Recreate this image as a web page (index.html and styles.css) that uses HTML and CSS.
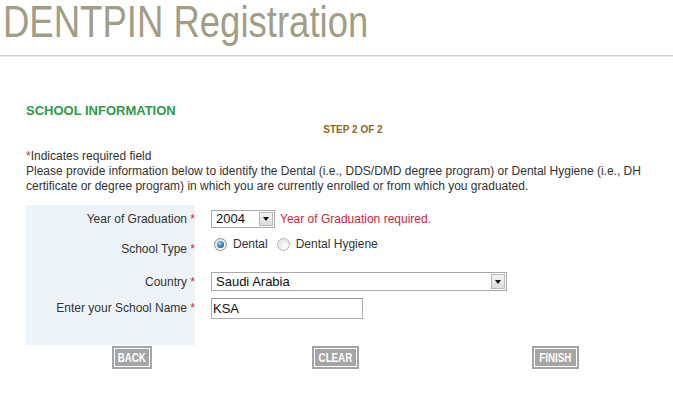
FILE: index.html
```html
<!DOCTYPE html>
<html lang="en">
<head>
<meta charset="utf-8">
<title>DENTPIN Registration</title>
<link rel="stylesheet" href="styles.css">
</head>
<body>
<header class="page-head">
  <h1 class="title">DENTPIN Registration</h1>
</header>
<hr class="rule">
<main class="content">
  <h2 class="section-title">SCHOOL INFORMATION</h2>
  <p class="step">STEP 2 OF 2</p>
  <p class="intro"><span class="req">*</span>Indicates required field<br>Please provide information below to identify the Dental (i.e., DDS/DMD degree program) or Dental Hygiene (i.e., DH certificate or degree program) in which you are currently enrolled or from which you graduated.</p>

  <form class="form">
    <div class="row row-year">
      <label class="label">Year of Graduation <span class="req">*</span></label>
      <div class="control">
        <span class="select select-year"><span class="select-text">2004</span><span class="select-btn"><span class="tri"></span></span></span>
        <span class="error">Year of Graduation required.</span>
      </div>
    </div>
    <div class="row row-type">
      <label class="label">School Type <span class="req">*</span></label>
      <div class="control control-top">
        <span class="radio radio-on"></span><span class="radio-text">Dental</span>
        <span class="radio radio-off"></span><span class="radio-text">Dental Hygiene</span>
      </div>
    </div>
    <div class="row row-country">
      <label class="label">Country <span class="req">*</span></label>
      <div class="control">
        <span class="select select-country"><span class="select-text">Saudi Arabia</span><span class="select-btn"><span class="tri"></span></span></span>
      </div>
    </div>
    <div class="row row-name">
      <label class="label">Enter your School Name <span class="req">*</span></label>
      <div class="control">
        <span class="textbox">KSA</span>
      </div>
    </div>
    <div class="row row-end">
      <div class="label"></div>
    </div>
    <div class="buttons">
      <span class="btn btn-back"><span class="btn-text">BACK</span></span>
      <span class="btn btn-clear"><span class="btn-text">CLEAR</span></span>
      <span class="btn btn-finish"><span class="btn-text">FINISH</span></span>
    </div>
  </form>
</main>
</body>
</html>
```

FILE: styles.css
```css
html, body {
  margin: 0;
  padding: 0;
  background: #ffffff;
  overflow-x: hidden;
}
body {
  width: 673px;
  font-family: "Liberation Sans", Arial, sans-serif;
  color: #333333;
}
.page-head {
  padding-left: 3px;
}
.title {
  margin: 0;
  font-family: "Liberation Sans", Arial, sans-serif;
  font-weight: normal;
  font-size: 44px;
  line-height: 44px;
  color: #a19e87;
  white-space: nowrap;
  display: inline-block;
  transform: scaleX(0.83);
  transform-origin: left center;
}
.rule {
  margin: 11px 0 0 0;
  height: 0;
  border: 0;
  border-top: 1px solid #d3d3cc;
  border-bottom: 1px solid #efefea;
}
.content {
  padding-left: 26px;
  width: 654px;
}
.section-title {
  margin: 46px 0 0 0;
  font-size: 13px;
  line-height: 15px;
  font-weight: bold;
  color: #2f9a4a;
}
.step {
  margin: 6px 0 0 0;
  font-size: 10px;
  line-height: 12px;
  font-weight: bold;
  color: #8a6a22;
  text-align: center;
}
.intro {
  margin: 13px 0 0 0;
  font-size: 12px;
  line-height: 15px;
  color: #333333;
}
.req {
  color: #d02b2b;
}
.form {
  margin-top: 11px;
}
.row {
  display: flex;
  font-size: 12px;
}
.label {
  width: 169px;
  flex: none;
  background: #eef3f8;
  display: flex;
  align-items: center;
  justify-content: flex-end;
  white-space: pre;
  color: #333333;
}
.control {
  display: flex;
  align-items: center;
  padding-left: 16px;
}
.control-top {
  align-items: flex-start;
  padding-top: 6px;
  padding-left: 19px;
}
.row-year { height: 27px; }
.row-type { height: 34px; }
.row-country { height: 31px; }
.row-name { height: 22px; }
.row-end { height: 26px; }

.select {
  position: relative;
  display: flex;
  align-items: center;
  box-sizing: border-box;
  height: 18px;
  border: 1px solid #a9a9a9;
  background: #fff;
  font-size: 13px;
  color: #111;
}
.select-text {
  padding-left: 4px;
}
.select-year { width: 64px; }
.select-country { width: 296px; height: 19px; }
.select-btn {
  position: absolute;
  right: 1px;
  top: 1px;
  bottom: 1px;
  width: 14px;
  box-sizing: border-box;
  border: 1px solid #b8b8b8;
  background: linear-gradient(#f4f4f4, #dcdcdc);
  display: flex;
  align-items: center;
  justify-content: center;
}
.tri {
  width: 0;
  height: 0;
  border-left: 3.5px solid transparent;
  border-right: 3.5px solid transparent;
  border-top: 4px solid #111;
}
.error {
  margin-left: 5px;
  color: #c8283a;
  font-size: 12px;
}
.radio {
  box-sizing: border-box;
  width: 13px;
  height: 13px;
  border-radius: 50%;
  border: 1px solid #8f9496;
  background: radial-gradient(circle at 60% 65%, #ffffff 0%, #e6e6e6 70%, #cfcfcf 100%);
  margin-right: 6px;
  position: relative;
}
.radio-on::after {
  content: "";
  position: absolute;
  left: 2px;
  top: 2px;
  width: 7px;
  height: 7px;
  border-radius: 50%;
  background: radial-gradient(circle at 40% 35%, #a6d4f7 0%, #2a77c4 55%, #1b4f8f 100%);
}
.radio-off {
  margin-left: 9px;
  border-color: #b5b8ba;
}
.radio-text {
  line-height: 13px;
  color: #333333;
}
.textbox {
  box-sizing: border-box;
  width: 152px;
  height: 21px;
  border: 1px solid #abadb3;
  border-top-color: #9a9a9a;
  padding-left: 1px;
  font-size: 13px;
  line-height: 19px;
  color: #111;
  background: #fff;
}
.buttons {
  display: flex;
  margin-top: 1px;
}
.btn {
  box-sizing: border-box;
  height: 23px;
  background: #a5a5a5;
  border: 2px solid #a5a5a5;
  box-shadow: inset 0 0 0 1px #ffffff;
  color: #ffffff;
  display: flex;
  align-items: center;
  justify-content: center;
  overflow: hidden;
}
.btn-text {
  display: inline-block;
  font-family: "Liberation Sans", Arial, sans-serif;
  font-weight: bold;
  font-size: 13px;
  line-height: 19px;
  transform: scaleX(0.75);
  white-space: nowrap;
}
.btn-back { width: 40px; margin-left: 86px; }
.btn-clear { width: 47px; margin-left: 160px; }
.btn-finish { width: 47px; margin-left: 173px; }
```
